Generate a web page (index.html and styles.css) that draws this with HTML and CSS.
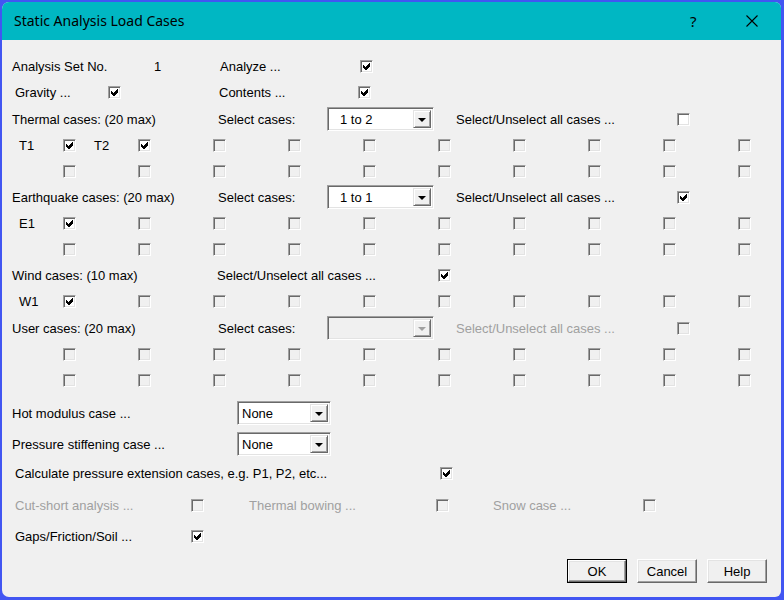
FILE: index.html
```html
<!DOCTYPE html>
<html>
<head>
<meta charset="utf-8">
<link rel="stylesheet" href="styles.css">
</head>
<body>
<div class="window">
  <div class="titlebar">
    <div class="title">Static Analysis Load Cases</div>
    <div class="tb-help">?</div>
    <div class="tb-close"><svg width="12" height="12" viewBox="0 0 12 12"><path d="M0.5 0.5 L11.5 11.5 M11.5 0.5 L0.5 11.5" stroke="#000" stroke-width="1.1" fill="none"/></svg></div>
  </div>
  <div class="content">
    <div class="row">
      <span class="lbl w142">Analysis Set No.</span>
      <span class="lbl w66">1</span>
      <span class="lbl w140">Analyze ...</span>
      <span class="cb"><svg class="ck" width="7" height="7" viewBox="0 0 7 7"><path d="M0 2 L2 4 L6 0 L7 0 L7 3 L3 7 L2 7 L0 5 Z"/></svg></span>
    </div>
    <div class="row">
      <span class="lbl w93 ind">Gravity ...</span>
      <span class="cb"><svg class="ck" width="7" height="7" viewBox="0 0 7 7"><path d="M0 2 L2 4 L6 0 L7 0 L7 3 L3 7 L2 7 L0 5 Z"/></svg></span>
      <span class="sp98"></span>
      <span class="lbl w139">Contents ...</span>
      <span class="cb"><svg class="ck" width="7" height="7" viewBox="0 0 7 7"><path d="M0 2 L2 4 L6 0 L7 0 L7 3 L3 7 L2 7 L0 5 Z"/></svg></span>
    </div>
    <div class="row r-therm">
      <span class="lbl w206">Thermal cases: (20 max)</span>
      <span class="lbl w109">Select cases:</span>
      <span class="dd"><span class="dd-text">1 to 2</span><span class="dd-btn"><span class="tri"></span></span></span>
      <span class="sp22"></span>
      <span class="lbl w221">Select/Unselect all cases ...</span>
      <span class="cb"></span>
    </div>
    <div class="grid">
      <div class="cell"><span class="clbl">T1</span><span class="cb"><svg class="ck" width="7" height="7" viewBox="0 0 7 7"><path d="M0 2 L2 4 L6 0 L7 0 L7 3 L3 7 L2 7 L0 5 Z"/></svg></span></div>
      <div class="cell"><span class="clbl">T2</span><span class="cb"><svg class="ck" width="7" height="7" viewBox="0 0 7 7"><path d="M0 2 L2 4 L6 0 L7 0 L7 3 L3 7 L2 7 L0 5 Z"/></svg></span></div>
      <div class="cell"><span class="cb dis"></span></div>
      <div class="cell"><span class="cb dis"></span></div>
      <div class="cell"><span class="cb dis"></span></div>
      <div class="cell"><span class="cb dis"></span></div>
      <div class="cell"><span class="cb dis"></span></div>
      <div class="cell"><span class="cb dis"></span></div>
      <div class="cell"><span class="cb dis"></span></div>
      <div class="cell"><span class="cb dis"></span></div>
      <div class="cell"><span class="cb dis"></span></div>
      <div class="cell"><span class="cb dis"></span></div>
      <div class="cell"><span class="cb dis"></span></div>
      <div class="cell"><span class="cb dis"></span></div>
      <div class="cell"><span class="cb dis"></span></div>
      <div class="cell"><span class="cb dis"></span></div>
      <div class="cell"><span class="cb dis"></span></div>
      <div class="cell"><span class="cb dis"></span></div>
      <div class="cell"><span class="cb dis"></span></div>
      <div class="cell"><span class="cb dis"></span></div>
    </div>
    <div class="row">
      <span class="lbl w206">Earthquake cases: (20 max)</span>
      <span class="lbl w109">Select cases:</span>
      <span class="dd"><span class="dd-text">1 to 1</span><span class="dd-btn"><span class="tri"></span></span></span>
      <span class="sp22"></span>
      <span class="lbl w221">Select/Unselect all cases ...</span>
      <span class="cb"><svg class="ck" width="7" height="7" viewBox="0 0 7 7"><path d="M0 2 L2 4 L6 0 L7 0 L7 3 L3 7 L2 7 L0 5 Z"/></svg></span>
    </div>
    <div class="grid">
      <div class="cell"><span class="clbl">E1</span><span class="cb"><svg class="ck" width="7" height="7" viewBox="0 0 7 7"><path d="M0 2 L2 4 L6 0 L7 0 L7 3 L3 7 L2 7 L0 5 Z"/></svg></span></div>
      <div class="cell"><span class="cb dis"></span></div>
      <div class="cell"><span class="cb dis"></span></div>
      <div class="cell"><span class="cb dis"></span></div>
      <div class="cell"><span class="cb dis"></span></div>
      <div class="cell"><span class="cb dis"></span></div>
      <div class="cell"><span class="cb dis"></span></div>
      <div class="cell"><span class="cb dis"></span></div>
      <div class="cell"><span class="cb dis"></span></div>
      <div class="cell"><span class="cb dis"></span></div>
      <div class="cell"><span class="cb dis"></span></div>
      <div class="cell"><span class="cb dis"></span></div>
      <div class="cell"><span class="cb dis"></span></div>
      <div class="cell"><span class="cb dis"></span></div>
      <div class="cell"><span class="cb dis"></span></div>
      <div class="cell"><span class="cb dis"></span></div>
      <div class="cell"><span class="cb dis"></span></div>
      <div class="cell"><span class="cb dis"></span></div>
      <div class="cell"><span class="cb dis"></span></div>
      <div class="cell"><span class="cb dis"></span></div>
    </div>
    <div class="row">
      <span class="lbl w205">Wind cases: (10 max)</span>
      <span class="lbl w221">Select/Unselect all cases ...</span>
      <span class="cb"><svg class="ck" width="7" height="7" viewBox="0 0 7 7"><path d="M0 2 L2 4 L6 0 L7 0 L7 3 L3 7 L2 7 L0 5 Z"/></svg></span>
    </div>
    <div class="grid">
      <div class="cell"><span class="clbl">W1</span><span class="cb"><svg class="ck" width="7" height="7" viewBox="0 0 7 7"><path d="M0 2 L2 4 L6 0 L7 0 L7 3 L3 7 L2 7 L0 5 Z"/></svg></span></div>
      <div class="cell"><span class="cb dis"></span></div>
      <div class="cell"><span class="cb dis"></span></div>
      <div class="cell"><span class="cb dis"></span></div>
      <div class="cell"><span class="cb dis"></span></div>
      <div class="cell"><span class="cb dis"></span></div>
      <div class="cell"><span class="cb dis"></span></div>
      <div class="cell"><span class="cb dis"></span></div>
      <div class="cell"><span class="cb dis"></span></div>
      <div class="cell"><span class="cb dis"></span></div>
    </div>
    <div class="row r-user">
      <span class="lbl w206">User cases: (20 max)</span>
      <span class="lbl w109">Select cases:</span>
      <span class="dd dd-dis"><span class="dd-text"></span><span class="dd-btn"><span class="tri"></span></span></span>
      <span class="sp22"></span>
      <span class="lbl w221 gray">Select/Unselect all cases ...</span>
      <span class="cb dis"></span>
    </div>
    <div class="grid">
      <div class="cell"><span class="cb dis"></span></div>
      <div class="cell"><span class="cb dis"></span></div>
      <div class="cell"><span class="cb dis"></span></div>
      <div class="cell"><span class="cb dis"></span></div>
      <div class="cell"><span class="cb dis"></span></div>
      <div class="cell"><span class="cb dis"></span></div>
      <div class="cell"><span class="cb dis"></span></div>
      <div class="cell"><span class="cb dis"></span></div>
      <div class="cell"><span class="cb dis"></span></div>
      <div class="cell"><span class="cb dis"></span></div>
      <div class="cell"><span class="cb dis"></span></div>
      <div class="cell"><span class="cb dis"></span></div>
      <div class="cell"><span class="cb dis"></span></div>
      <div class="cell"><span class="cb dis"></span></div>
      <div class="cell"><span class="cb dis"></span></div>
      <div class="cell"><span class="cb dis"></span></div>
      <div class="cell"><span class="cb dis"></span></div>
      <div class="cell"><span class="cb dis"></span></div>
      <div class="cell"><span class="cb dis"></span></div>
      <div class="cell"><span class="cb dis"></span></div>
    </div>
    <div class="row r-hot">
      <span class="lbl w225">Hot modulus case ...</span>
      <span class="dd dd-s"><span class="dd-text">None</span><span class="dd-btn"><span class="tri"></span></span></span>
    </div>
    <div class="row r-press">
      <span class="lbl w225">Pressure stiffening case ...</span>
      <span class="dd dd-s"><span class="dd-text">None</span><span class="dd-btn"><span class="tri"></span></span></span>
    </div>
    <div class="row r-calc">
      <span class="lbl w425 ind">Calculate pressure extension cases, e.g. P1, P2, etc...</span>
      <span class="cb"><svg class="ck" width="7" height="7" viewBox="0 0 7 7"><path d="M0 2 L2 4 L6 0 L7 0 L7 3 L3 7 L2 7 L0 5 Z"/></svg></span>
    </div>
    <div class="row r-cut">
      <span class="lbl w176 ind gray">Cut-short analysis ...</span>
      <span class="cb dis"></span>
      <span class="sp45"></span>
      <span class="lbl w187 gray">Thermal bowing ...</span>
      <span class="cb dis"></span>
      <span class="sp44"></span>
      <span class="lbl w150 gray">Snow case ...</span>
      <span class="cb dis"></span>
    </div>
    <div class="row r-gaps">
      <span class="lbl w176 ind">Gaps/Friction/Soil ...</span>
      <span class="cb"><svg class="ck" width="7" height="7" viewBox="0 0 7 7"><path d="M0 2 L2 4 L6 0 L7 0 L7 3 L3 7 L2 7 L0 5 Z"/></svg></span>
    </div>
    <div class="buttons">
      <span class="btn btn-def"><span class="btn-in">OK</span></span>
      <span class="btn"><span class="btn-in">Cancel</span></span>
      <span class="btn"><span class="btn-in">Help</span></span>
    </div>
  </div>
</div>
</body>
</html>
```
FILE: styles.css
```css
html, body {
  margin: 0;
  padding: 0;
}
body {
  width: 784px;
  height: 600px;
  background: #4256f2;
  overflow: hidden;
  font-family: "Liberation Sans", Arial, sans-serif;
  font-size: 13px;
  color: #000;
}
.window {
  margin: 2px 3px 0 2px;
  width: 779px;
  height: 595px;
  background: #f0f0f0;
  border-radius: 7px 6px 6px 7px;
  overflow: hidden;
  display: flex;
  flex-direction: column;
}
.titlebar {
  height: 38px;
  flex: none;
  background: #00b7c3;
  display: flex;
  align-items: center;
  position: relative;
}
.title {
  font-family: "Noto Sans", "Open Sans", sans-serif;
  font-size: 14px;
  padding-left: 12px;
  flex: 1;
  padding-bottom: 1px;
}
.tb-help {
  font-family: "Noto Sans", sans-serif;
  font-size: 15px;
  width: 12px;
  margin-right: 44px;
}
.tb-close {
  width: 12px;
  height: 12px;
  margin-right: 23px;
  display: flex;
}
.content {
  flex: 1;
  padding: 13px 14px 0 10px;
  display: flex;
  flex-direction: column;
}
.row {
  height: 26px;
  display: flex;
  align-items: center;
  flex: none;
}
.lbl {
  flex: none;
  white-space: nowrap;
}
.ind { margin-left: 3px; }
.gray { color: #a0a0a0; }
.w66 { width: 66px; }
.w93 { width: 93px; }
.w109 { width: 109px; }
.w139 { width: 139px; }
.w140 { width: 140px; }
.w142 { width: 142px; }
.w150 { width: 150px; }
.w176 { width: 176px; }
.w187 { width: 187px; }
.w205 { width: 205px; }
.w206 { width: 206px; }
.w221 { width: 221px; }
.w225 { width: 225px; }
.w425 { width: 425px; }
.sp22 { width: 22px; flex: none; }
.sp44 { width: 44px; flex: none; }
.sp45 { width: 45px; flex: none; }
.sp98 { width: 98px; flex: none; }

.cb {
  width: 13px;
  height: 13px;
  box-sizing: border-box;
  border: 1px solid;
  border-color: #a0a0a0 #ffffff #ffffff #a0a0a0;
  box-shadow: inset 1px 1px 0 #696969, inset -1px -1px 0 #e3e3e3;
  background: #fff;
  display: flex;
  align-items: center;
  justify-content: center;
  flex: none;
}
.cb.dis { background: #f0f0f0; }
.ck { fill: #000; shape-rendering: crispEdges; }

.grid {
  display: grid;
  grid-template-columns: repeat(10, 75px);
  grid-auto-rows: 26px;
  margin-left: 1px;
}
.cell {
  display: flex;
  align-items: center;
}
.clbl {
  width: 44px;
  padding-left: 6px;
  flex: none;
}
.cell .cb { margin-left: 50px; }
.cell .clbl + .cb { margin-left: 0; }

.dd {
  width: 107px;
  height: 24px;
  box-sizing: border-box;
  border: 1px solid;
  border-color: #a0a0a0 #ffffff #ffffff #a0a0a0;
  box-shadow: inset 1px 1px 0 #696969, inset -1px -1px 0 #e3e3e3;
  background: #fff;
  padding: 2px 2px 2px 2px;
  display: flex;
  flex: none;
}
.dd-s { width: 94px; }
.dd-dis { background: #f0f0f0; }
.dd-text {
  flex: 1;
  padding-left: 10px;
  line-height: 20px;
}
.dd-s .dd-text { padding-left: 2px; }
.dd-btn {
  width: 18px;
  box-sizing: border-box;
  background: #f0f0f0;
  border: 1px solid;
  border-color: #e3e3e3 #696969 #696969 #e3e3e3;
  box-shadow: inset 1px 1px 0 #ffffff, inset -1px -1px 0 #a0a0a0;
  display: flex;
  align-items: center;
  justify-content: center;
}
.tri {
  width: 0;
  height: 0;
  border-left: 4px solid transparent;
  border-right: 4px solid transparent;
  border-top: 4px solid #000;
  margin-top: 1px;
}
.dd-dis .tri { border-top-color: #a0a0a0; }

.r-therm { margin-top: 1px; }
.r-user { margin-top: 1px; }
.r-hot { margin-top: 7px; }
.r-press { margin-top: 5px; }
.r-calc { margin-top: 3px; }
.r-cut { margin-top: 6px; }
.r-gaps { margin-top: 5px; }

.buttons {
  display: flex;
  justify-content: flex-end;
  gap: 10px;
  margin-top: 10px;
}
.btn {
  width: 60px;
  height: 24px;
  box-sizing: border-box;
  background: #f0f0f0;
  border: 1px solid;
  border-color: #ffffff #696969 #696969 #ffffff;
  box-shadow: inset -1px -1px 0 #a0a0a0, inset 1px 1px 0 #e3e3e3;
  display: flex;
}
.btn-in {
  flex: 1;
  display: flex;
  align-items: center;
  justify-content: center;
}
.btn-def {
  border: 1px solid #000;
  box-shadow: none;
  padding: 0;
}
.btn-def .btn-in {
  border: 1px solid;
  border-color: #ffffff #696969 #696969 #ffffff;
  box-shadow: inset -1px -1px 0 #a0a0a0, inset 1px 1px 0 #e3e3e3;
}
```
